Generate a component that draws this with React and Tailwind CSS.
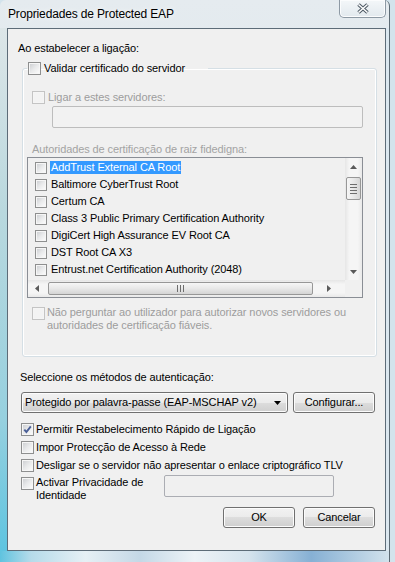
import React from "react";

const certs = [
  "AddTrust External CA Root",
  "Baltimore CyberTrust Root",
  "Certum CA",
  "Class 3 Public Primary Certification Authority",
  "DigiCert High Assurance EV Root CA",
  "DST Root CA X3",
  "Entrust.net Certification Authority (2048)",
];

const btn =
  "rounded-[3px] border border-[#707070] bg-[linear-gradient(to_bottom,#f2f2f2_0%,#ebebeb_50%,#dddddd_50%,#cfcfcf_100%)] shadow-[inset_0_0_0_1px_#fcfcfc]";

function Box({ checked = false, disabled = false, small = false }) {
  return (
    <span
      className={`relative flex shrink-0 border p-[1px] ${small ? "h-[12px] w-[12px]" : "h-[13px] w-[13px]"} ${
        disabled ? "border-[#c4c4c4] bg-[#f5f5f5]" : "border-[#8e8f8f] bg-[#f6f6f6]"
      }`}
    >
      <span
        className={`h-full w-full ${
          disabled
            ? "bg-[#f3f3f3]"
            : "bg-[linear-gradient(135deg,#cfd1d4_0%,#e9eaeb_50%,#fafafa_100%)]"
        }`}
      />
      {checked && (
        <svg className="absolute inset-0" width="11" height="11" viewBox="0 0 11 11">
          <path d="M2.3 5.6 L4.4 8 L8.8 2.4" fill="none" stroke="#4a5f97" strokeWidth="1.9" />
        </svg>
      )}
    </span>
  );
}

function Tri({ dir, color = "#5a5a5a" }) {
  const d = {
    up: "M0 4 L3.5 0 L7 4 Z",
    down: "M0 0 L7 0 L3.5 4 Z",
    left: "M4 0 L4 7 L0 3.5 Z",
    right: "M0 0 L4 3.5 L0 7 Z",
  }[dir];
  const vert = dir === "up" || dir === "down";
  return (
    <svg width={vert ? 7 : 4} height={vert ? 4 : 7} viewBox={vert ? "0 0 7 4" : "0 0 4 7"}>
      <path d={d} fill={color} />
    </svg>
  );
}

export default function App() {
  return (
    <div className="h-[562px] w-[395px] overflow-hidden bg-[#d3e3ec] font-['Liberation_Sans',Arial,sans-serif] text-[11px] leading-[13px] tracking-[-0.1px] text-black">
      <div className="flex h-full w-[390px] flex-col rounded-t-[6px] border-r border-[#5c6a74] bg-[linear-gradient(to_bottom,#e5ebef_0%,#dbe6ed_40%,#cfe1ec_100%)]">
        {/* title bar */}
        <div className="flex h-[28px] shrink-0 items-start justify-between">
          <span className="pl-[8px] pt-[7px] text-[12px] leading-[14px] tracking-[-0.15px] [text-shadow:0_0_6px_#ffffff]">
            Propriedades de Protected EAP
          </span>
          <div className="mr-[3px] flex h-[18px] w-[47px] items-center justify-center rounded-b-[5px] border border-t-0 border-[#8d99a4] bg-[linear-gradient(to_bottom,#f4f7f9,#e2e9ee)] shadow-[inset_0_0_0_1px_#fbfcfd]">
            <svg width="14" height="11" viewBox="0 0 14 11">
              <path d="M2.5 1.5 L11.5 9.5 M11.5 1.5 L2.5 9.5" stroke="#4f5b66" strokeWidth="3.6" />
              <path d="M2.5 1.5 L11.5 9.5 M11.5 1.5 L2.5 9.5" stroke="#ffffff" strokeWidth="1.5" />
            </svg>
          </div>
        </div>

        <div className="flex shrink-0">
          <div className="w-[7px] bg-[linear-gradient(to_bottom,#dde6e8_0%,#b9d8de_35%,#96d0df_75%,#5ec4e0_100%)]" />
          {/* client area */}
          <div className="flex h-[523px] w-[379px] flex-col border border-[#5d6c78] bg-[#f0f0f0]">
            <div className="mt-[12px] pl-[10px] leading-[14px]">Ao estabelecer a ligação:</div>

            <fieldset className="ml-[14px] mt-[6px] h-[296px] w-[355px] rounded-[3px] border border-[#d5dfe5] shadow-[inset_0_0_0_1px_#ffffff]">
              <legend className="ml-[4px] flex h-[14px] w-[181px] items-center gap-[3px] pl-[1px] leading-[14px]">
                <Box />
                <span>Validar certificado do servidor</span>
              </legend>

              <div className="ml-[9px] mt-[15px] flex h-[14px] items-center gap-[3px] text-[#9d9d9d]">
                <Box disabled />
                <span>Ligar a estes servidores:</span>
              </div>
              <div className="ml-[29px] mt-[2px] h-[22px] w-[311px] rounded-[2px] border border-[#bdbdbd] bg-[#f2f2f2]" />

              <div className="ml-[9px] mt-[14px] leading-[14px] text-[#a3a3a3]">
                Autoridades de certificação de raiz fidedigna:
              </div>

              {/* list */}
              <div className="ml-[4px] mt-[1px] flex h-[141px] w-[336px] flex-col border border-[#8a8e95] bg-[#f0f0f0]">
                <div className="flex h-[122px]">
                  <div className="flex-1 overflow-hidden pt-[1px]">
                    {certs.map((c, i) => (
                      <div key={c} className="flex h-[17px] items-center whitespace-nowrap pl-[7px]">
                        <Box small />
                        <span
                          className={`ml-[3px] h-[13px] px-[1px] leading-[13px] ${
                            i === 0 ? "bg-[#3399ff] text-white" : ""
                          }`}
                        >
                          {c}
                        </span>
                      </div>
                    ))}
                  </div>
                  <div className="flex w-[17px] flex-col items-center bg-[linear-gradient(to_right,#e6e6e6,#f5f5f5_25%,#f5f5f5_75%,#e9e9e9)]">
                    <div className="flex h-[17px] items-center justify-center">
                      <Tri dir="up" />
                    </div>
                    <div className="mt-[2px] flex h-[23px] w-[15px] flex-col items-center justify-center gap-[2px] rounded-[2px] border border-[#979797] bg-[linear-gradient(to_right,#f6f6f6,#e8e8e8_50%,#d6d6d6)]">
                      <span className="h-px w-[7px] bg-[#6d6d6d]" />
                      <span className="h-px w-[7px] bg-[#6d6d6d]" />
                      <span className="h-px w-[7px] bg-[#6d6d6d]" />
                      <span className="h-px w-[7px] bg-[#6d6d6d]" />
                    </div>
                    <div className="flex-1" />
                    <div className="flex h-[17px] items-center justify-center">
                      <Tri dir="down" />
                    </div>
                  </div>
                </div>
                <div className="flex h-[17px]">
                  <div className="flex flex-1 items-center bg-[linear-gradient(to_bottom,#e6e6e6,#f5f5f5_25%,#f5f5f5_75%,#e9e9e9)]">
                    <div className="flex w-[17px] items-center justify-center">
                      <Tri dir="left" />
                    </div>
                    <div className="ml-[3px] flex h-[13px] w-[265px] items-center justify-center gap-[2px] rounded-[2px] border border-[#979797] bg-[linear-gradient(to_bottom,#f6f6f6,#e8e8e8_50%,#d4d4d4)]">
                      <span className="h-[7px] w-px bg-[#6d6d6d]" />
                      <span className="h-[7px] w-px bg-[#6d6d6d]" />
                      <span className="h-[7px] w-px bg-[#6d6d6d]" />
                    </div>
                    <div className="flex flex-1 items-center justify-center">
                      <Tri dir="right" />
                    </div>
                  </div>
                  <div className="w-[17px] bg-[#f0f0f0]" />
                </div>
              </div>

              <div className="ml-[9px] mt-[8px] flex items-start gap-[2px] text-[#9d9d9d]">
                <span className="mt-[1px]">
                  <Box disabled />
                </span>
                <span>
                  Não perguntar ao utilizador para autorizar novos servidores ou
                  <br />
                  autoridades de certificação fiáveis.
                </span>
              </div>
            </fieldset>

            <div className="mt-[13px] pl-[12px] leading-[14px]">Seleccione os métodos de autenticação:</div>

            <div className="mt-[8px] flex items-center">
              <div className={`ml-[13px] flex h-[21px] w-[267px] items-center justify-between pl-[3px] pr-[6px] ${btn}`}>
                <span>Protegido por palavra-passe (EAP-MSCHAP v2)</span>
                <Tri dir="down" color="#000000" />
              </div>
              <button className={`ml-[5px] h-[21px] w-[82px] ${btn}`}>Configurar...</button>
            </div>

            <div className="ml-[13px] mt-[9px] flex flex-col gap-[4px]">
              <div className="flex h-[14px] items-center gap-[2px]">
                <Box checked />
                <span>Permitir Restabelecimento Rápido de Ligação</span>
              </div>
              <div className="flex h-[14px] items-center gap-[2px]">
                <Box />
                <span>Impor Protecção de Acesso à Rede</span>
              </div>
              <div className="flex h-[14px] items-center gap-[2px]">
                <Box />
                <span>Desligar se o servidor não apresentar o enlace criptográfico TLV</span>
              </div>
            </div>

            <div className="ml-[13px] mt-[3px] flex items-start">
              <span className="mt-[2px]">
                <Box />
              </span>
              <span className="ml-[2px] w-[128px] pt-[1px]">Activar Privacidade de Identidade</span>
              <div className="h-[22px] w-[170px] rounded-[2px] border border-[#abadb3] bg-[#f0f0f0]" />
            </div>

            <div className="mt-[5px] flex justify-end gap-[8px] pr-[10px]">
              <button className={`h-[21px] w-[72px] ${btn}`}>OK</button>
              <button className={`h-[21px] w-[72px] ${btn}`}>Cancelar</button>
            </div>
          </div>
          <div className="flex-1 bg-[#dbe7ef]" />
        </div>

        <div className="flex-1 bg-[linear-gradient(to_right,#5fc3df_0%,#b6dbea_8%,#e6f0f5_22%,#c4d8e6_36%,#edf3f7_50%,#d5e3ed_64%,#86b0d4_80%,#d2e2ec_100%)]" />
      </div>
    </div>
  );
}
